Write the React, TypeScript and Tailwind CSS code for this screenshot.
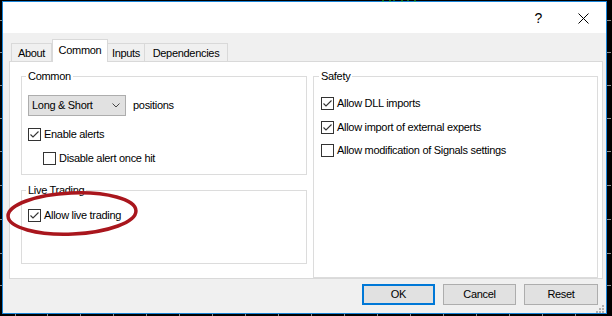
import React from "react";

const font = "font-['Liberation_Sans',Arial,sans-serif] text-[11px] tracking-[-0.3px] text-black";

function CheckBox({ checked }: { checked?: boolean }) {
  return (
    <svg width="13" height="13" viewBox="0 0 13 13" className="shrink-0">
      <rect x="0.5" y="0.5" width="12" height="12" fill="#fff" stroke="#333" />
      {checked && (
        <polyline
          points="2.5,6.5 5,9 10.5,3.5"
          fill="none"
          stroke="#333"
          strokeWidth="1.1"
        />
      )}
    </svg>
  );
}

function Row({
  checked,
  label,
  className,
}: {
  checked?: boolean;
  label: string;
  className?: string;
}) {
  return (
    <div className={"flex items-center gap-[3px] h-[13px] " + (className ?? "")}>
      <CheckBox checked={checked} />
      <span className="leading-[13px] whitespace-nowrap">{label}</span>
    </div>
  );
}

function Group({
  title,
  className,
  children,
}: {
  title: string;
  className?: string;
  children: React.ReactNode;
}) {
  return (
    <fieldset className={"border border-[#dcdcdc] min-w-0 " + (className ?? "")}>
      <legend className="px-[2px] -ml-[2px] leading-[14px] h-[14px]">{title}</legend>
      {children}
    </fieldset>
  );
}

function Tab({ label, active, className }: { label: string; active?: boolean; className?: string }) {
  return (
    <div
      className={
        "flex justify-center border-[#d9d9d9] " +
        (active
          ? "h-[23px] -mb-px bg-white border border-b-0 relative z-10 pt-[3px]"
          : "h-[18px] bg-[#f0f0f0] border-t border-r pt-[2px] ") +
        " " +
        (className ?? "")
      }
    >
      <span className="leading-[14px]">{label}</span>
    </div>
  );
}

function Button({ label, primary, className }: { label: string; primary?: boolean; className?: string }) {
  return (
    <div
      className={
        "h-[21px] flex items-center justify-center bg-[#e1e1e1] " +
        (primary ? "border-2 border-[#0078d7] " : "border border-[#adadad] ") +
        (className ?? "")
      }
    >
      {label}
    </div>
  );
}

const vTicks = [20, 52, 85, 118, 151, 185, 219, 253, 285];
const hTicks = [15, 47, 80, 113, 146, 179, 212, 245, 278, 311, 344, 377, 410, 443, 476, 509, 542, 575];

export default function App() {
  return (
    <div className={"relative w-[612px] h-[316px] bg-black overflow-hidden pl-[2px] pt-[1px] " + font}>
      {vTicks.map((y) => (
        <div key={"l" + y} className="absolute left-0 w-[2px] h-px bg-[#8a8a8a]" style={{ top: y }} />
      ))}
      {vTicks.map((y) => (
        <div key={"r" + y} className="absolute left-[607px] w-[4px] h-px bg-[#8a8a8a]" style={{ top: y }} />
      ))}
      {hTicks.map((x) => (
        <div key={"b" + x} className="absolute top-[314px] w-px h-[2px] bg-[#8a8a8a]" style={{ left: x }} />
      ))}
      <svg className="absolute left-[380px] top-0" width="40" height="2">
        <path d="M3 0v2M10 0v2M14 0v1M22 0v2M28 0v1M35 0v2" stroke="#22c322" strokeWidth="1" />
      </svg>

      <div className="w-[605px] h-[313px] border border-[#1883d7] bg-[#f0f0f0] flex flex-col">
        {/* title bar */}
        <div className="h-[31px] bg-white flex justify-end">
          <div className="w-[45px] flex items-center justify-center text-[14px] tracking-normal pt-[1px]">?</div>
          <div className="w-[45px] flex items-center justify-center pt-[1px]">
            <svg width="11" height="11" viewBox="0 0 11 11">
              <path d="M0.5 0.5L10.5 10.5M10.5 0.5L0.5 10.5" stroke="#000" strokeWidth="1" />
            </svg>
          </div>
        </div>

        {/* body */}
        <div className="flex-1 flex flex-col pt-[6px] pl-[6px] pr-[3px]">
          <div className="flex items-end h-[22px] ml-[2px]">
            <Tab label="About" className="w-[41px] border-l" />
            <Tab label="Common" active className="w-[56px]" />
            <Tab label="Inputs" className="w-[37px]" />
            <Tab label="Dependencies" className="w-[83px]" />
          </div>

          <div className="w-[594px] h-[218px] border border-[#d9d9d9] bg-white flex gap-[6px] pl-[11px] pt-[7px]">
            <div className="flex flex-col w-[286px]">
              <Group title="Common" className="pl-[6px] pb-[9px]">
                <div className="flex items-center mt-[12px]">
                  <div className="w-[98px] h-[21px] bg-[#e1e1e1] border border-[#adadad] flex items-center justify-between pl-[3px] pr-[5px]">
                    <span>Long &amp; Short</span>
                    <svg width="8" height="5" viewBox="0 0 8 5">
                      <polyline points="0.5,0.5 4,4 7.5,0.5" fill="none" stroke="#444" />
                    </svg>
                  </div>
                  <span className="ml-[7px]">positions</span>
                </div>
                <Row checked label="Enable alerts" className="mt-[12px]" />
                <Row label="Disable alert once hit" className="mt-[11px] ml-[15px]" />
              </Group>
              <Group title="Live Trading" className="mt-[8px] pl-[6px] pb-[41px]">
                <Row checked label="Allow live trading" className="mt-[12px]" />
              </Group>
            </div>
            <Group title="Safety" className="w-[285px] pl-[7px]">
              <Row checked label="Allow DLL imports" className="mt-[14px]" />
              <Row checked label="Allow import of external experts" className="mt-[11px]" />
              <Row label="Allow modification of Signals settings" className="mt-[10px]" />
            </Group>
          </div>

          <div className="flex justify-end gap-[8px] pr-[5px] mt-[5px]">
            <Button label="OK" primary className="w-[73px]" />
            <Button label="Cancel" className="w-[73px]" />
            <Button label="Reset" className="w-[74px]" />
          </div>
        </div>
      </div>

      {/* size grip */}
      <svg className="absolute left-[596px] top-[305px]" width="8" height="8" viewBox="0 0 8 8">
        <g fill="#b0b0b0">
          <rect x="6" y="0" width="2" height="2" />
          <rect x="3" y="3" width="2" height="2" />
          <rect x="6" y="3" width="2" height="2" />
          <rect x="0" y="6" width="2" height="2" />
          <rect x="3" y="6" width="2" height="2" />
          <rect x="6" y="6" width="2" height="2" />
        </g>
      </svg>

      {/* red highlight */}
      <svg className="absolute left-[6px] top-[191px]" width="134" height="46" viewBox="0 0 134 46">
        <ellipse
          cx="66"
          cy="22.5"
          rx="64"
          ry="20.5"
          fill="none"
          stroke="#a9161d"
          strokeWidth="3.5"
          transform="rotate(-2.5 66 22.5)"
        />
      </svg>
    </div>
  );
}
